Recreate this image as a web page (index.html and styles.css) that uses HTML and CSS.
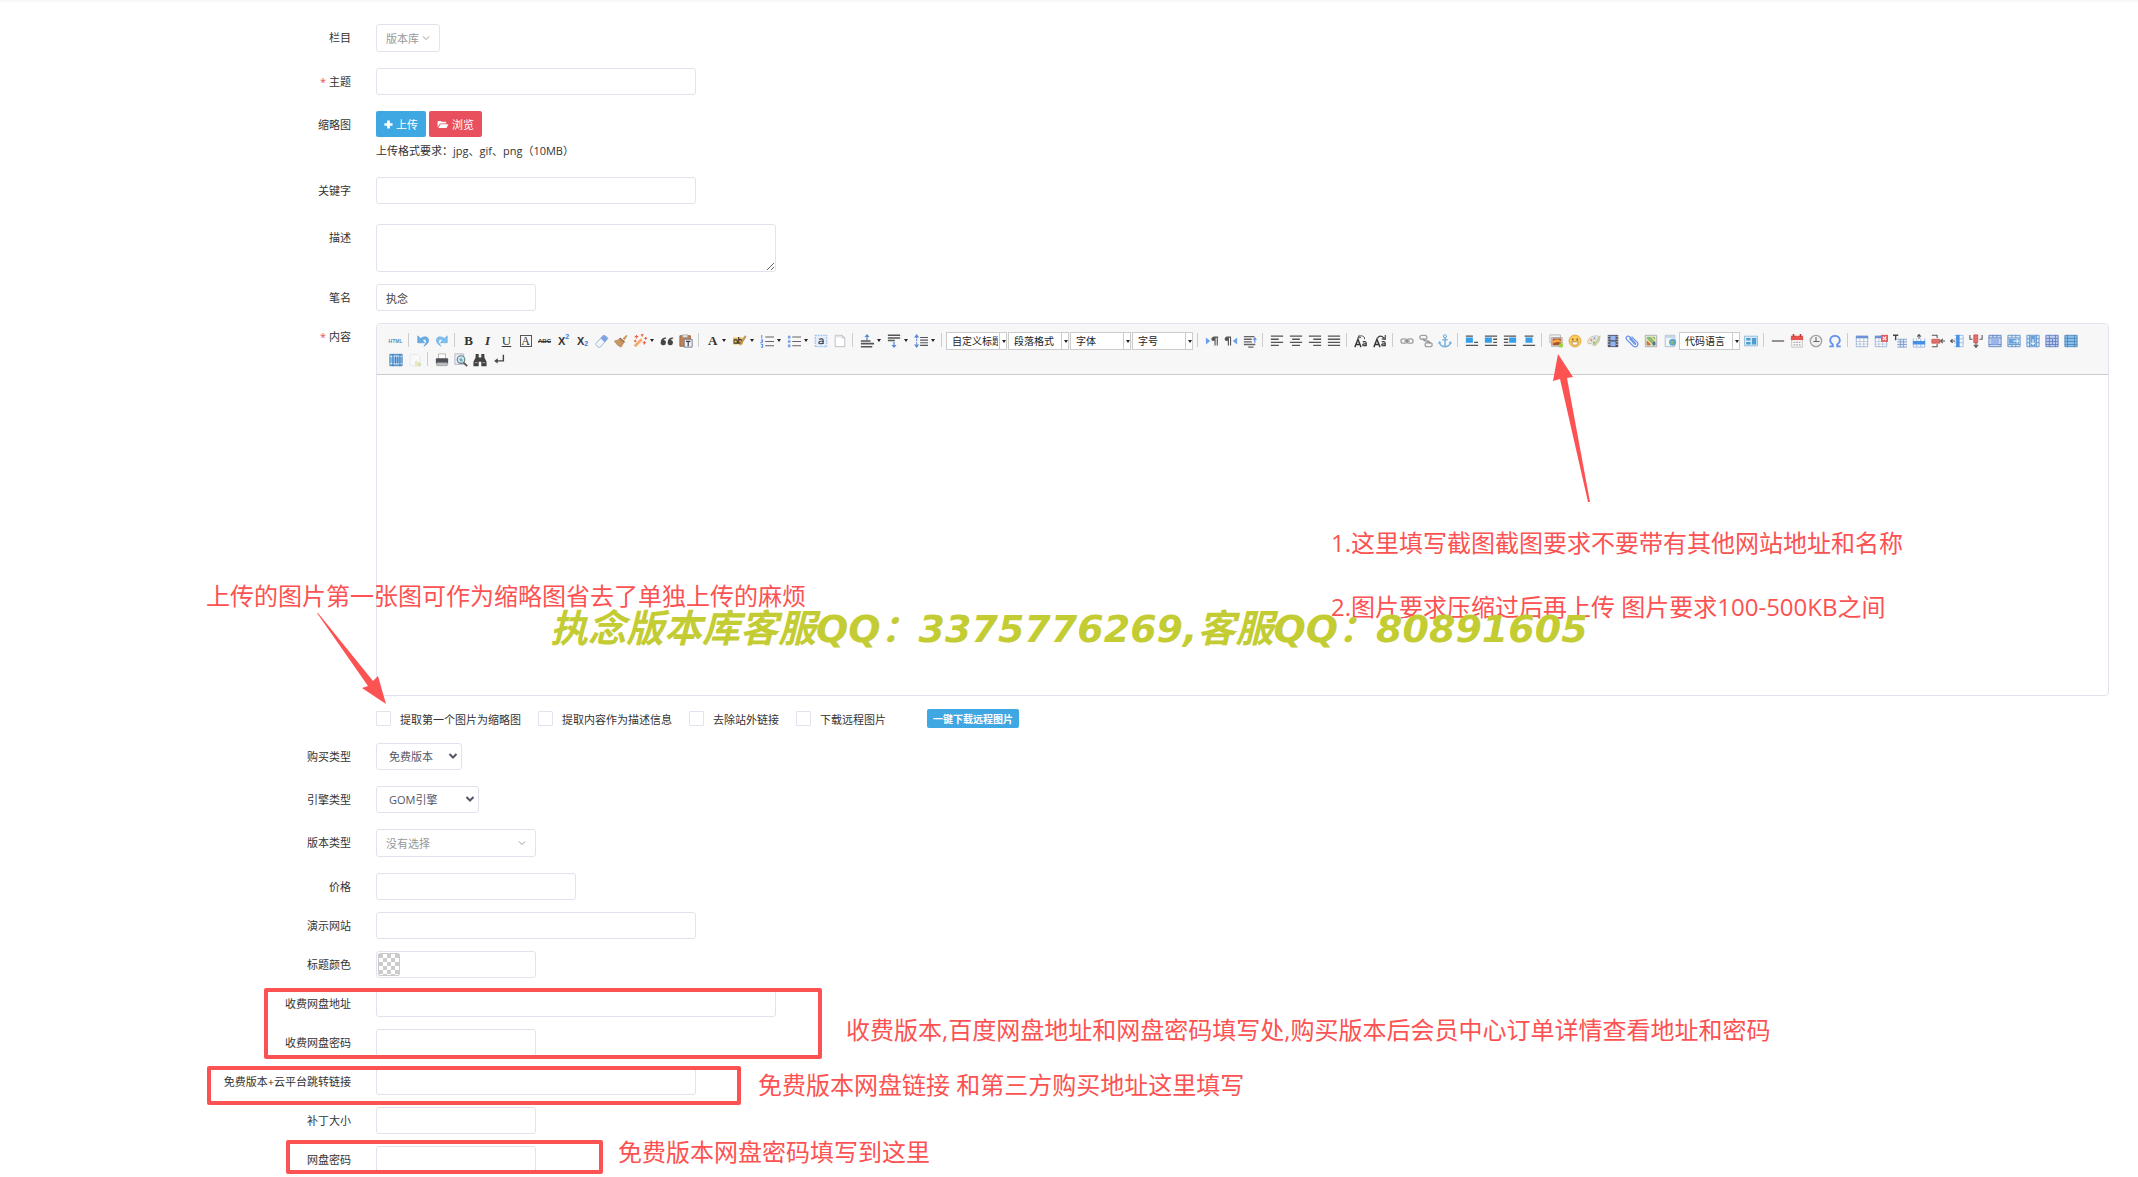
FILE: index.html
```html
<!DOCTYPE html>
<html lang="zh-CN">
<head>
    <meta charset="UTF-8">
    <meta name="viewport" content="width=device-width, initial-scale=1.0">
    <title>发布版本</title>
    <link rel="stylesheet" href="styles.css">
</head>
<body>

<form class="post-form">
    <div class="row row-tall">
        <label class="row-label" for="catid">栏目</label>
        <div class="row-field">
            <button type="button" class="picker" id="catid">版本库
                <svg class="chevron" viewBox="0 0 8 8"><path d="M1 2.500l3 3 3-3" fill="none" stroke="#999"/></svg>
            </button>
        </div>
    </div>

    <div class="row row-tall">
        <label class="row-label" for="title"><span class="required">*</span> 主题</label>
        <div class="row-field"><input type="text" class="control w-320" id="title"></div>
    </div>

    <div class="row">
        <span class="row-label">缩略图</span>
        <div class="row-field">
            <div class="btn-group">
                <button type="button" class="btn btn-blue"><svg viewBox="0 0 10 10"><path d="M3.500 0.500h3v3h3v3h-3v3h-3v-3h-3v-3h3z" fill="#fff"/></svg>上传</button>
                <button type="button" class="btn btn-red"><svg class="wide" viewBox="0 0 12 10"><path d="M0 8V1.500Q0 1 .5 1H3.500l1 1H9q.5 0 .5.5V4H3.500Q2.600 4 2 5z" fill="#fff"/><path d="M3.300 4.800H12L10 9H.8z" fill="#fff"/></svg>浏览</button>
            </div>
            <p class="help">上传格式要求：jpg、gif、png（10MB）</p>
        </div>
    </div>

    <div class="row row-keywords">
        <label class="row-label" for="keywords">关键字</label>
        <div class="row-field"><input type="text" class="control w-320" id="keywords"></div>
    </div>

    <div class="row">
        <label class="row-label" for="description">描述</label>
        <div class="row-field"><textarea class="control w-400" id="description"></textarea></div>
    </div>

    <div class="row">
        <label class="row-label" for="author">笔名</label>
        <div class="row-field"><input type="text" class="control w-160" id="author" value="执念"></div>
    </div>

    <div class="row">
        <label class="row-label" for="content"><span class="required">*</span> 内容</label>
        <div class="row-field">
            <div class="editor">
                <div class="toolbar">
                    <button type="button" class="tool tool-html" aria-label="源代码">HTML</button>
                    <span class="split"></span>
                    <button type="button" class="tool" aria-label="撤销"><svg viewBox="0 0 16 16"><path d="M2 2v8h8L7.500 7.500Q10 5 11.500 7T9 14Q16 10 14 5.500T5 5z" fill="#5aa5e4" stroke="#2f7fc8" stroke-width=".6"/></svg></button>
                    <button type="button" class="tool" aria-label="重做"><svg viewBox="0 0 16 16"><path d="M14 2v8H6l2.500-2.500Q6 5 4.500 7T7 14Q0 10 2 5.500T11 5z" fill="#6fb8ee" stroke="#4a9ada" stroke-width=".6"/></svg></button>
                    <span class="split"></span>
                    <button type="button" class="tool tool-serif bold" aria-label="加粗">B</button>
                    <button type="button" class="tool tool-serif bold italic" aria-label="斜体">I</button>
                    <button type="button" class="tool tool-serif underline" aria-label="下划线">U</button>
                    <button type="button" class="tool tool-serif" aria-label="字符边框"><span class="boxed">A</span></button>
                    <button type="button" class="tool tool-abc" aria-label="删除线">ABC</button>
                    <button type="button" class="tool tool-script" aria-label="上标">X<sup>2</sup></button>
                    <button type="button" class="tool tool-script" aria-label="下标">X<sub>2</sub></button>
                    <button type="button" class="tool" aria-label="清除格式"><svg viewBox="0 0 16 16"><path d="M1 11L9 2q1-1 2.500 0L14 4q1 1 0 2L6 15q-1 .8-2 0L1.500 13q-1-1-.5-2z" fill="#f2f5fa" stroke="#8ea3c4"/><path d="M6.500 5L9 2q1-1 2.500 0L14 4q1 1 0 2l-3 3.500z" fill="#6f9be0"/></svg></button>
                    <button type="button" class="tool" aria-label="格式刷"><svg viewBox="0 0 16 16"><path d="M10 5l4-4 1.500 1L12 7z" fill="#c98a4b"/><path d="M7 4l6 5-2 1-5-4.500z" fill="#8d5a2c"/><path d="M6 5.500L11 10l-3 5q-5-2-7.500-7Q4 8 6 5.500z" fill="#c58d50" stroke="#9b6631" stroke-width=".7"/></svg></button>
                    <button type="button" class="tool tool-drop" aria-label="自动排版"><svg viewBox="0 0 16 16"><path d="M2 14l8-8" stroke="#f2a35c" stroke-width="3"/><path d="M2 3h4M4 1v4M9 1h3M10.500 0v3M13 5h3M14.500 3.500v3M11 10h4M13 8v4M1 8h3M2.500 6.500v3" stroke="#e8562c" stroke-width="1.300"/></svg></button>
                    <button type="button" class="tool" aria-label="引用"><svg viewBox="0 0 16 16"><path d="M7 4Q1 4 .8 9.500a3 3 0 1 0 3.200-2.600Q4.500 5.500 7 5zM15 4Q9 4 8.800 9.500a3 3 0 1 0 3.200-2.600Q12.500 5.500 15 5z" fill="#333"/></svg></button>
                    <button type="button" class="tool" aria-label="纯文本粘贴"><svg viewBox="0 0 16 16"><path d="M1 2h12v12H1z" fill="#b87743" stroke="#8a5227"/><path d="M4 1h6v3H4z" fill="#ddd" stroke="#888" stroke-width=".6"/><path d="M6 6h9v9H6z" fill="#eef2f8" stroke="#667"/><path d="M8 8.500h5M10.500 8.500V14" stroke="#222" stroke-width="1.300"/></svg></button>
                    <span class="split"></span>
                    <button type="button" class="tool tool-serif tool-drop bold" aria-label="字体颜色">A</button>
                    <button type="button" class="tool tool-drop" aria-label="背景色"><svg viewBox="0 0 16 16"><path d="M0 4h11v8H0z" fill="#f0b63c"/><path d="M1 8.500q0-2 2-2t2 2v2H2.500q-1.500 0-1.500-1M6.500 3.500v7H8q2 0 2-2t-2-2H7" fill="none" stroke="#222" stroke-width="1.300"/><path d="M15 3l-5 8-2 2 .5-3 5-8z" fill="#c99a5c" stroke="#7a5525" stroke-width=".5"/></svg></button>
                    <button type="button" class="tool tool-drop" aria-label="有序列表"><svg viewBox="0 0 16 16"><path d="M2 1v4M1 7h2v1.500L1 10h2M1 12h2v3H1" fill="none" stroke="#4f83e8" stroke-width="1.200"/><path d="M6 3.500h10M6 8.500h10M6 13.500h10" stroke="#555" stroke-width="1.200"/></svg></button>
                    <button type="button" class="tool tool-drop" aria-label="无序列表"><svg viewBox="0 0 16 16"><path d="M1 2h3v3H1zM1 7h3v3H1zM1 12h3v3H1z" fill="#6c95ee"/><path d="M6 3.500h10M6 8.500h10M6 13.500h10" stroke="#555" stroke-width="1.200"/></svg></button>
                    <button type="button" class="tool" aria-label="全选"><svg viewBox="0 0 16 16"><rect x="1.500" y="1.500" width="13" height="13" fill="#e3eefc" stroke="#9dbfee" stroke-width="1.500" stroke-dasharray="2 1"/><path d="M5.500 6q5-1.500 5 1.500v4M10.500 8q-5 0-5 2t5 .5" fill="none" stroke="#333" stroke-width="1.400"/></svg></button>
                    <button type="button" class="tool" aria-label="清空文档"><svg viewBox="0 0 16 16"><path d="M2.500 1.500h8l3 3v10h-11z" fill="#fff" stroke="#aeb4bd"/><path d="M10.500 1.500v3h3" fill="none" stroke="#aeb4bd"/><path d="M3 2h7v2H3z" fill="#dfe3e8"/></svg></button>
                    <span class="split"></span>
                    <button type="button" class="tool tool-drop" aria-label="段前距"><svg viewBox="0 0 16 16"><path d="M8 7V3" stroke="#4f7fd0" stroke-width="1.500"/><path d="M8 0l3 3.500H5z" fill="#4f7fd0"/><path d="M1 8h11M1 11h15M1 14.500h13" stroke="#444" stroke-width="1.800"/></svg></button>
                    <button type="button" class="tool tool-drop" aria-label="段后距"><svg viewBox="0 0 16 16"><path d="M1 1.500h14M1 4.500h14M1 7.500h8" stroke="#444" stroke-width="1.800"/><path d="M8 9v4" stroke="#4f7fd0" stroke-width="1.500"/><path d="M8 16l3-3.500H5z" fill="#4f7fd0"/></svg></button>
                    <button type="button" class="tool tool-drop" aria-label="行间距"><svg viewBox="0 0 16 16"><path d="M3 3v10" stroke="#4f7fd0" stroke-width="1.300" stroke-dasharray="2 1"/><path d="M3 0l3 4H0zM3 16l3-4H0z" fill="#4f7fd0"/><path d="M7 4h9M7 7h9M7 10h9M7 13h9" stroke="#444" stroke-width="1.400"/></svg></button>
                    <span class="split"></span>
                    <span class="combo"><select aria-label="自定义标题"><option>自定义标题</option></select></span>
                    <span class="combo"><select aria-label="段落格式"><option>段落格式</option></select></span>
                    <span class="combo"><select aria-label="字体"><option>字体</option></select></span>
                    <span class="combo"><select aria-label="字号"><option>字号</option></select></span>
                    <span class="split"></span>
                    <button type="button" class="tool" aria-label="从左向右"><svg viewBox="0 0 16 16"><path d="M1 4l5 4-5 4z" fill="#5b97f0"/><path d="M15 3.500H9.500M11.500 4v9M14 4v9" fill="none" stroke="#444" stroke-width="1.300"/><circle cx="9.500" cy="5.800" r="2.300" fill="#444"/></svg></button>
                    <button type="button" class="tool" aria-label="从右向左"><svg viewBox="0 0 16 16"><path d="M15 4l-5 4 5 4z" fill="#5b97f0"/><path d="M8 3.500H2.500M5 4v9M7.500 4v9" fill="none" stroke="#444" stroke-width="1.300"/><circle cx="3" cy="5.800" r="2.300" fill="#444"/></svg></button>
                    <button type="button" class="tool" aria-label="首行缩进"><svg viewBox="0 0 16 16"><path d="M1 3h12M1 6h9M1 9h9M1 12h13M6 15h6" stroke="#555" stroke-width="1.700"/><path d="M13.500 10V6" stroke="#4f7fd0" stroke-width="1.300"/><path d="M13.500 3.500l2.500 3h-5z" fill="#4f7fd0"/></svg></button>
                    <span class="split"></span>
                    <button type="button" class="tool" aria-label="居左对齐"><svg viewBox="0 0 16 16"><path d="M1 2.500h14M1 6h9M1 9.500h14M1 13h9" stroke="#444" stroke-width="1.500"/></svg></button>
                    <button type="button" class="tool" aria-label="居中对齐"><svg viewBox="0 0 16 16"><path d="M1 2.500h14M3.500 6h9M1 9.500h14M3.500 13h9" stroke="#444" stroke-width="1.500"/></svg></button>
                    <button type="button" class="tool" aria-label="居右对齐"><svg viewBox="0 0 16 16"><path d="M1 2.500h14M6 6h9M1 9.500h14M6 13h9" stroke="#444" stroke-width="1.500"/></svg></button>
                    <button type="button" class="tool" aria-label="两端对齐"><svg viewBox="0 0 16 16"><path d="M1 2.500h14M1 6h14M1 9.500h14M1 13h14" stroke="#444" stroke-width="1.500"/></svg></button>
                    <span class="split"></span>
                    <button type="button" class="tool" aria-label="字母大写"><svg viewBox="0 0 16 16"><path d="M1 15l3.500-9L8 15M2.500 12h4" fill="none" stroke="#222" stroke-width="1.600"/><path d="M10 9q4-1 4 1.500V14M14 11q-4 0-4 1.500t4 .5" fill="none" stroke="#222" stroke-width="1.300"/><path d="M5 4q3-4 7 0V6M6 1L4.500 4.500 8 4" fill="none" stroke="#333"/></svg></button>
                    <button type="button" class="tool" aria-label="字母小写"><svg viewBox="0 0 16 16"><path d="M1 15l3.500-9L8 15M2.500 12h4" fill="none" stroke="#222" stroke-width="1.600"/><path d="M10 9q4-1 4 1.500V14M14 11q-4 0-4 1.500t4 .5" fill="none" stroke="#222" stroke-width="1.300"/><path d="M5 5q3-5 8 0M14 1v5l-4-.5" fill="none" stroke="#333" stroke-width="1.300"/></svg></button>
                    <span class="split"></span>
                    <button type="button" class="tool" aria-label="超链接"><svg viewBox="0 0 16 16"><rect x="1" y="5.500" width="7" height="5" rx="2.500" fill="none" stroke="#999" stroke-width="1.500"/><rect x="8" y="5.500" width="7" height="5" rx="2.500" fill="none" stroke="#999" stroke-width="1.500"/><path d="M5 8h6" stroke="#777" stroke-width="1.500"/></svg></button>
                    <button type="button" class="tool" aria-label="取消链接"><svg viewBox="0 0 16 16"><rect x="1" y="1.500" width="8" height="4.500" rx="2.200" fill="none" stroke="#999" stroke-width="1.500"/><rect x="7" y="10" width="8" height="4.500" rx="2.200" fill="none" stroke="#999" stroke-width="1.500"/><path d="M5 5q0 3 4 3t3 3" fill="none" stroke="#888" stroke-width="1.500"/></svg></button>
                    <button type="button" class="tool" aria-label="锚点"><svg viewBox="0 0 16 16"><circle cx="8" cy="2.500" r="1.700" fill="none" stroke="#6fabdc" stroke-width="1.300"/><path d="M8 4v10.500M5 6.500h6M1.500 9q.5 5 6.500 5.500Q14 14 14.500 9" fill="none" stroke="#6fabdc" stroke-width="1.700"/><path d="M0 11l1.500-3 2.500 2.500zM16 11l-1.500-3-2.500 2.500z" fill="#6fabdc"/></svg></button>
                    <span class="split"></span>
                    <button type="button" class="tool" aria-label="默认"><svg viewBox="0 0 16 16"><path d="M1 4h8v6H1z" fill="#2196e8"/><path d="M1 2.500h8M10.500 9.500H15M1 13h14" stroke="#444" stroke-width="1.500"/></svg></button>
                    <button type="button" class="tool" aria-label="左浮动"><svg viewBox="0 0 16 16"><path d="M1 4h8v6H1z" fill="#2196e8"/><path d="M1 2.500h14M10.500 6H15M10.500 9.500H15M1 13h14" stroke="#444" stroke-width="1.500"/></svg></button>
                    <button type="button" class="tool" aria-label="右浮动"><svg viewBox="0 0 16 16"><path d="M7 4h8v6H7z" fill="#2196e8"/><path d="M1 2.500h14M1 6h5M1 9.500h5M1 13h14" stroke="#444" stroke-width="1.500"/></svg></button>
                    <button type="button" class="tool" aria-label="居中"><svg viewBox="0 0 16 16"><path d="M4 4h8v6H4z" fill="#2196e8"/><path d="M3 2.500h10M1 13h14" stroke="#444" stroke-width="1.500"/></svg></button>
                    <span class="split"></span>
                    <button type="button" class="tool" aria-label="多图上传"><svg viewBox="0 0 16 16"><path d="M1 1h12v9H1z" fill="#f4f4f4" stroke="#aaa"/><path d="M3 4h12v10H3z" fill="#fff" stroke="#999"/><path d="M4 5h10v8H4z" fill="#a3401c"/><path d="M4 8q5-4 10 0v2q-5-2-10 1z" fill="#f5a035"/><circle cx="13.500" cy="13" r="2.500" fill="#8ed31e"/></svg></button>
                    <button type="button" class="tool" aria-label="表情"><svg viewBox="0 0 16 16"><circle cx="8" cy="8" r="6.800" fill="#fbc84a" stroke="#e09a26"/><path d="M5.500 5v2.500M10.500 5v2.500" stroke="#7a4a10" stroke-width="1.600"/><path d="M4 9h8q-1 4-4 4T4 9z" fill="#fff" stroke="#a8661a" stroke-width=".8"/></svg></button>
                    <button type="button" class="tool" aria-label="涂鸦"><svg viewBox="0 0 16 16"><path d="M1 8q2-6 10-6 5 1 3 6-3 6-7 5-1-3-3-2-4 1-3-3z" fill="#e8e4d8" stroke="#b3ad9c" stroke-width=".8"/><circle cx="5" cy="7" r="1.200" fill="#e67a4b"/><circle cx="8.500" cy="5" r="1.200" fill="#6aa7e0"/><circle cx="8" cy="10" r="1.300" fill="#87b958"/><path d="M15 1L9 10l-2 4 3.500-2.500L15.500 3z" fill="#b7c38a"/></svg></button>
                    <button type="button" class="tool" aria-label="视频"><svg viewBox="0 0 16 16"><path d="M2 1h12v14H2z" fill="#3e4450"/><path d="M5 2h6v5H5zM5 8.500h6V14H5z" fill="#88aef2"/><path d="M3.300 2v12M12.700 2v12" stroke="#dde" stroke-width="1.200" stroke-dasharray="1.500 1.500"/></svg></button>
                    <button type="button" class="tool" aria-label="附件"><svg viewBox="0 0 16 16"><path d="M5 5l6 6.500q1.500 1 .8-.8L5.500 3.500Q3.500 1.500 2 3t0 3.500l7.500 7.500q3 1.500 4.500-.5t0-4L7.500 3" fill="none" stroke="#5d8be6" stroke-width="1.500"/></svg></button>
                    <button type="button" class="tool" aria-label="百度地图"><svg viewBox="0 0 16 16"><path d="M1.500 1.500h13v13h-13z" fill="#fff" stroke="#999"/><path d="M3 3h10v10H3z" fill="#7db36c"/><path d="M3 8h4v5H3z" fill="#d65c3a"/><path d="M8 3l5 5M3 6l7 7" stroke="#f0df7c" stroke-width="1.500"/><path d="M10 9h3v4h-3z" fill="#3a5e9c"/></svg></button>
                    <button type="button" class="tool" aria-label="网页"><svg viewBox="0 0 16 16"><path d="M2.500 1.500h11v13h-11z" fill="#f1f5fa" stroke="#a9b6c6"/><path d="M3 2h10v2.500H3z" fill="#bcd3ea"/><circle cx="11" cy="9.500" r="4" fill="#4c9cce"/><path d="M9 7q3 0 3 2t-2 3.500Q8 10 9 7z" fill="#76bb57"/></svg></button>
                    <span class="combo"><select aria-label="代码语言"><option>代码语言</option></select></span>
                    <button type="button" class="tool" aria-label="模板"><svg viewBox="0 0 16 16"><path d="M.5 2.500h15v11H.5z" fill="#d8ecfa" stroke="#7fb0d4"/><path d="M2.500 4.500h5v3h-5zM2.500 9h5v3h-5zM9 4.500h5V12H9z" fill="#3b94cf"/></svg></button>
                    <span class="split"></span>
                    <button type="button" class="tool" aria-label="分隔线"><svg viewBox="0 0 16 16"><path d="M1 8h14" stroke="#333" stroke-width="1.300"/></svg></button>
                    <button type="button" class="tool" aria-label="日期"><svg viewBox="0 0 16 16"><path d="M2 3h12v12H2z" fill="#fff" stroke="#b5b5b5"/><path d="M1 2h14v5H1z" fill="#e2433c"/><path d="M4 0v3M12 0v3" stroke="#b22" stroke-width="1.800"/><path d="M4 9.500h8M4 12.500h8" stroke="#999" stroke-width="1.500" stroke-dasharray="2 1"/></svg></button>
                    <button type="button" class="tool" aria-label="时间"><svg viewBox="0 0 16 16"><circle cx="8" cy="8" r="6.500" fill="#f0f0f0" stroke="#999" stroke-width="1.500"/><path d="M8 3.500V8.500h4M5 8.500h3" fill="none" stroke="#555" stroke-width="1.200"/></svg></button>
                    <button type="button" class="tool" aria-label="特殊字符"><svg viewBox="0 0 16 16"><path d="M1.500 14H5.500V12Q2 9.500 2.500 6.500 3.500 2 8 2t5.500 4.500Q14 9.500 10.500 12v2h4" fill="none" stroke="#4f86ee" stroke-width="2"/></svg></button>
                    <span class="split"></span>
                    <button type="button" class="tool" aria-label="插入表格"><svg viewBox="0 0 16 16"><path d="M1.500 2.500h13v12h-13z" fill="#fff" stroke="#8fa6d2"/><path d="M1 2h14v3H1z" fill="#5f88d2"/><path d="M1 8.500h14M1 11.500h14M5.500 5v10M10 5v10" stroke="#a9b9d6" stroke-width=".9"/></svg></button>
                    <button type="button" class="tool" aria-label="删除表格"><svg viewBox="0 0 16 16"><path d="M1.500 2.500h13v12h-13z" fill="#fff" stroke="#8fa6d2"/><path d="M1 2h14v3H1z" fill="#5f88d2"/><path d="M1 8.500h14M1 11.500h14M5.500 5v10M10 5v10" stroke="#a9b9d6" stroke-width=".9"/><path d="M8 1h8v8H8z" fill="#e5484d"/><path d="M10 3l4 4M14 3l-4 4" stroke="#fff" stroke-width="1.500"/></svg></button>
                    <button type="button" class="tool" aria-label="表格前插入行"><svg viewBox="0 0 16 16"><path d="M0 1.500h6M3 1.500V7" stroke="#333" stroke-width="1.600"/><path d="M5 6h11v9H5z" fill="#dfe8f5"/><path d="M5 6h11M5 9h11M5 12h11M5 15h11M8.500 6v9M12 6v9" stroke="#7594c4"/></svg></button>
                    <button type="button" class="tool" aria-label="前插入行"><svg viewBox="0 0 16 16"><path d="M1.500 5v10h13V5M5.500 5v10M10 5v10" fill="none" stroke="#8fb1e2"/><path d="M1 8h14v4H1z" fill="#2f86e6"/><path d="M8 5.500V1M6 3l2-2.500L10 3" fill="none" stroke="#444" stroke-width="1.200"/></svg></button>
                    <button type="button" class="tool" aria-label="删除行"><svg viewBox="0 0 16 16"><path d="M1 1.500h6v3M1 14.500h6v-3" fill="none" stroke="#444" stroke-width="1.200"/><path d="M1 6h9v4.500H1z" fill="#e2605c" stroke="#b33" stroke-width=".8"/><path d="M10 8h6M13.500 5.500L11 8l2.500 2.500" fill="none" stroke="#444" stroke-width="1.300"/></svg></button>
                    <button type="button" class="tool" aria-label="前插入列"><svg viewBox="0 0 16 16"><path d="M5 1.500h10v13H5M5 5.500h10M5 10h10" fill="none" stroke="#8fb1e2"/><path d="M7 1h4v14H7z" fill="#2f86e6"/><path d="M6 8H1M3 6L.5 8 3 10" fill="none" stroke="#444" stroke-width="1.200"/></svg></button>
                    <button type="button" class="tool" aria-label="删除列"><svg viewBox="0 0 16 16"><path d="M1 1v5h3M15 1v5h-3" fill="none" stroke="#444" stroke-width="1.200"/><path d="M5.500 1h4.500v9H5.500z" fill="#e2605c" stroke="#b33" stroke-width=".8"/><path d="M8 10v6M5.500 12.500L8 15l2.500-2.500" fill="none" stroke="#444" stroke-width="1.300"/></svg></button>
                    <button type="button" class="tool" aria-label="合并单元格"><svg viewBox="0 0 16 16"><path d="M1 1.500h14v13H1z" fill="#c5d4f0" stroke="#4f74bf"/><path d="M1 4.500h14M5.500 1v3M10 1v3M1 12h14" stroke="#4f74bf"/><path d="M3.500 5h9v7h-9z" fill="#92aeea"/></svg></button>
                    <button type="button" class="tool" aria-label="右合并单元格"><svg viewBox="0 0 16 16"><path d="M1 1.500h14v13H1z" fill="#d9e8f8" stroke="#4f88c4"/><path d="M1 4.500h14M1 12h14M5.500 1v3M10 1v3M5.500 12v3M10 12v3" stroke="#4f88c4"/><path d="M2 5.500h12V11H2z" fill="#5b9bd8"/><path d="M7 8h6M11 6l2 2-2 2" fill="none" stroke="#fff" stroke-width="1.200"/></svg></button>
                    <button type="button" class="tool" aria-label="下合并单元格"><svg viewBox="0 0 16 16"><path d="M1 1.500h14v13H1z" fill="#d9e8f8" stroke="#4f88c4"/><path d="M4 1v14M12 1v14M1 5.500h3M12 5.500h3M1 10h3M12 10h3" stroke="#4f88c4"/><path d="M5 2h6v12H5z" fill="#5b9bd8"/><path d="M8 6v6M6 10l2 2 2-2" fill="none" stroke="#fff" stroke-width="1.200"/></svg></button>
                    <button type="button" class="tool" aria-label="拆分成行"><svg viewBox="0 0 16 16"><path d="M1 1.500h14v13H1z" fill="#b9caef" stroke="#4f70bb"/><path d="M1 5h14M1 8.500h14M1 12h14M5 1v14M8.500 5v7M12 1v14" stroke="#4f70bb"/></svg></button>
                    <button type="button" class="tool" aria-label="拆分成列"><svg viewBox="0 0 16 16"><path d="M1 1.500h14v13H1z" fill="#7fb9e9" stroke="#3f7db6"/><path d="M1 5h14M1 8.500h14M1 12h14M4 1v14M12 1v14" stroke="#3f7db6"/></svg></button>
                    <button type="button" class="tool" aria-label="拆分单元格"><svg viewBox="0 0 16 16"><path d="M1 1.500h14v13H1z" fill="#7fb6ea" stroke="#2f70ac"/><path d="M1 4h14M1 12h14" stroke="#d8eaf8"/><path d="M4.500 1v14M7.500 4v8M10 4v8M12.500 1v14" stroke="#2f70ac" stroke-width="1.200"/></svg></button>
                    <button type="button" class="tool faded" aria-label="图表"><svg viewBox="0 0 16 16"><path d="M2.500 1.500h8l3 3v10h-11z" fill="#fff" stroke="#c8ccd2"/><path d="M8 9h3v6H8z" fill="#e6c84a"/><path d="M11 11h4v4h-4z" fill="#8fc15a"/></svg></button>
                    <span class="split"></span>
                    <button type="button" class="tool" aria-label="打印"><svg viewBox="0 0 16 16"><path d="M4 1h8v6H4z" fill="#fff" stroke="#aaa"/><path d="M1 7q0-1 1-1h12q1 0 1 1v5H1z" fill="#3c3f45"/><path d="M2 11h12v3.500H2z" fill="#b8bbc0" stroke="#777" stroke-width=".6"/></svg></button>
                    <button type="button" class="tool" aria-label="预览"><svg viewBox="0 0 16 16"><path d="M1 1h10v12H1z" fill="#e9edf1" stroke="#aab"/><circle cx="8" cy="7.500" r="4.300" fill="#c9e3f2" stroke="#56707e" stroke-width="1.300"/><path d="M6 7.500q2-3 3.500 0t-2 2z" fill="#5ba0a8"/><path d="M11 11l4 4" stroke="#444" stroke-width="2"/></svg></button>
                    <button type="button" class="tool" aria-label="查询替换"><svg viewBox="0 0 16 16"><path d="M3 1h3.500v4h3V1H13v4l2.500 5v5H9.500v-5h-3v5H.5v-5L3 5z" fill="#2f2f2f"/><path d="M2 11h3M11 11h3" stroke="#aaa"/></svg></button>
                    <button type="button" class="tool" aria-label="换行"><svg viewBox="0 0 16 16"><path d="M13 2v7H5" fill="none" stroke="#333" stroke-width="1.600"/><path d="M6.500 6v6L2.500 9z" fill="#333"/></svg></button>
                </div>
                <textarea class="editor-body" id="content"></textarea>
            </div>
            <div class="options">
                <label class="option"><input type="checkbox">提取第一个图片为缩略图</label>
                <label class="option"><input type="checkbox">提取内容作为描述信息</label>
                <label class="option"><input type="checkbox">去除站外链接</label>
                <label class="option"><input type="checkbox">下载远程图片</label>
                <button type="button" class="btn btn-blue btn-small">一键下载远程图片</button>
            </div>
        </div>
    </div>

    <div class="row row-tall">
        <label class="row-label" for="buytype">购买类型</label>
        <div class="row-field">
            <span class="select-box">
                <select class="control" id="buytype"><option>免费版本</option></select>
                <svg viewBox="0 0 10 10"><path d="M1.500 3L5 6.500 8.500 3" fill="none" stroke="#556" stroke-width="2"/></svg>
            </span>
        </div>
    </div>

    <div class="row row-tall">
        <label class="row-label" for="engine">引擎类型</label>
        <div class="row-field">
            <span class="select-box select-engine">
                <select class="control" id="engine"><option>GOM引擎</option></select>
                <svg viewBox="0 0 10 10"><path d="M1.500 3L5 6.500 8.500 3" fill="none" stroke="#556" stroke-width="2"/></svg>
            </span>
        </div>
    </div>

    <div class="row row-tall">
        <label class="row-label" for="vertype">版本类型</label>
        <div class="row-field">
            <button type="button" class="picker w-160" id="vertype">没有选择
                <svg class="chevron" viewBox="0 0 8 8"><path d="M1 2.500l3 3 3-3" fill="none" stroke="#999"/></svg>
            </button>
        </div>
    </div>

    <div class="row">
        <label class="row-label" for="price">价格</label>
        <div class="row-field"><input type="text" class="control w-200" id="price"></div>
    </div>

    <div class="row">
        <label class="row-label" for="demo">演示网站</label>
        <div class="row-field"><input type="text" class="control w-320" id="demo"></div>
    </div>

    <div class="row">
        <label class="row-label" for="color">标题颜色</label>
        <div class="row-field color-field">
            <input type="text" class="control w-160" id="color">
            <span class="swatch"></span>
        </div>
    </div>

    <div class="row">
        <label class="row-label" for="payurl">收费网盘地址</label>
        <div class="row-field"><input type="text" class="control w-400" id="payurl"></div>
    </div>

    <div class="row">
        <label class="row-label" for="paypwd">收费网盘密码</label>
        <div class="row-field"><input type="text" class="control w-160" id="paypwd"></div>
    </div>

    <div class="row">
        <label class="row-label" for="freeurl">免费版本+云平台跳转链接</label>
        <div class="row-field"><input type="text" class="control w-320" id="freeurl"></div>
    </div>

    <div class="row">
        <label class="row-label" for="size">补丁大小</label>
        <div class="row-field"><input type="text" class="control w-160" id="size"></div>
    </div>

    <div class="row">
        <label class="row-label" for="freepwd">网盘密码</label>
        <div class="row-field"><input type="text" class="control w-160" id="freepwd"></div>
    </div>
</form>

<!-- red guide notes drawn over the form -->
<div class="guide">
    <p class="note note-thumb">上传的图片第一张图可作为缩略图省去了单独上传的麻烦</p>
    <p class="note note-shot">1.这里填写截图截图要求不要带有其他网站地址和名称</p>
    <p class="note note-zip">2.图片要求压缩过后再上传 图片要求100-500KB之间</p>
    <p class="note note-pay">收费版本,百度网盘地址和网盘密码填写处,购买版本后会员中心订单详情查看地址和密码</p>
    <p class="note note-free">免费版本网盘链接 和第三方购买地址这里填写</p>
    <p class="note note-pwd">免费版本网盘密码填写到这里</p>

    <div class="frame frame-pay"></div>
    <div class="frame frame-free"></div>
    <div class="frame frame-pwd"></div>

    <svg class="arrow arrow-thumb" viewBox="0 0 70 92"><path d="M0 0L1 0L56 68L61 63L69 91L45 75L51 73z" fill="#fc5252"/></svg>
    <svg class="arrow arrow-shot" viewBox="0 0 40 150"><path d="M6 0L21 23L15 24L38 148L36 148L8 25L1 27z" fill="#fc5252"/></svg>

    <p class="watermark">执念版本库客服QQ：3375776269,客服QQ：80891605</p>
</div>

</body>
</html>
```

FILE: styles.css
```css
* {
    box-sizing: border-box;
}

body {
    margin: 0;
    position: relative;
    min-height: 100vh;
    background-color: #fff;
    border-top: 2px solid #f7f7f7;
    color: #333;
    font-family: "Open Sans", "Noto Sans CJK SC", sans-serif;
    font-size: 11px;
}

button,
input,
select,
textarea {
    font: inherit;
    color: inherit;
}

p {
    margin: 0;
}

/* form rows */
.post-form {
    padding: 22px 29px 0 0;
}

.row {
    display: grid;
    grid-template-columns: 351px 1fr;
    column-gap: 25px;
    margin-bottom: 12px;
}

.row:last-child {
    margin-bottom: 0;
}

.row-tall {
    margin-bottom: 16px;
}

.row-keywords {
    margin-bottom: 20px;
}

.row-label {
    text-align: right;
    line-height: 28px;
    height: 27px;
}

.required {
    color: #e7505a;
}

.row-field {
    display: flex;
    flex-direction: column;
    align-items: flex-start;
    min-width: 0;
}

.control {
    display: block;
    height: 27px;
    padding: 0 9px;
    border: 1px solid #e2e2ef;
    border-radius: 3px;
    background-color: #fff;
    color: #444;
}

textarea.control {
    height: 48px;
    resize: both;
}

.w-160 {
    width: 160px;
}

.w-200 {
    width: 200px;
}

.w-320 {
    width: 320px;
}

.w-400 {
    width: 400px;
}

.picker {
    display: flex;
    align-items: center;
    justify-content: space-between;
    gap: 3px;
    height: 28px;
    padding: 0 9px;
    border: 1px solid #e2e2ef;
    border-radius: 3px;
    background-color: #fff;
    color: #999;
}

.chevron {
    width: 8px;
    height: 8px;
}

.btn-group {
    display: flex;
    gap: 3px;
}

.btn {
    display: flex;
    align-items: center;
    gap: 3px;
    height: 26px;
    padding: 0 8px;
    border: none;
    border-radius: 2px;
    color: #fff;
}

.btn svg {
    width: 9px;
    height: 9px;
}

.btn svg.wide {
    width: 12px;
}

.btn-blue {
    background-color: #3fa7e1;
}

.btn-red {
    background-color: #e9505e;
}

.btn-small {
    height: 19px;
    padding: 0 6px;
    margin-left: 24px;
    font-size: 10px;
    font-weight: bold;
}

.help {
    line-height: 28px;
}

/* editor */
.editor {
    width: 100%;
    border: 1px solid #e2e2ef;
    border-radius: 4px;
}

.toolbar {
    display: flex;
    flex-wrap: wrap;
    padding: 7px 12px 5px 9px;
    background-color: #f7f7f7;
    border-bottom: 1px solid #ccc;
    border-radius: 3px 3px 0 0;
}

.tool {
    display: flex;
    align-items: center;
    justify-content: center;
    width: 19px;
    height: 19px;
    padding: 0;
    border: none;
    background: none;
    color: #333;
}

.tool svg {
    flex: none;
    width: 14px;
    height: 14px;
    opacity: 0.9;
}

.tool-html {
    font-family: "Liberation Sans", sans-serif;
    font-size: 5px;
    font-weight: bold;
    color: #5590c0;
}

.tool-serif {
    font-family: "Liberation Serif", serif;
    font-size: 13px;
}

.tool-abc {
    font-family: "Liberation Sans", sans-serif;
    font-size: 6px;
    font-weight: bold;
    text-decoration: line-through;
}

.tool-script {
    font-family: "Liberation Sans", sans-serif;
    font-size: 11px;
    font-weight: bold;
}

.tool-script sup,
.tool-script sub {
    font-size: 7px;
    line-height: 12px;
    color: #3f74e0;
}

.tool-script sup {
    align-self: flex-start;
}

.tool-script sub {
    align-self: flex-end;
}

.bold {
    font-weight: bold;
}

.italic {
    font-style: italic;
}

.underline {
    text-decoration: underline;
}

.boxed {
    width: 12px;
    height: 12px;
    border: 1px solid #555;
    line-height: 11px;
    font-size: 12px;
}

.faded {
    opacity: 0.4;
}

.tool-drop {
    width: 27px;
    justify-content: flex-start;
    padding-left: 3px;
    gap: 3px;
}

.tool-drop.tool-serif {
    padding-left: 5px;
    gap: 5px;
}

.tool-drop::after {
    content: "";
    border: 2px solid transparent;
    border-top: 3px solid #222;
    border-bottom: none;
}

.split {
    width: 2px;
    height: 14px;
    margin: 2px 3px;
    border-left: 1px solid #ccc;
}

.combo {
    position: relative;
    width: 62px;
    height: 19px;
    padding-top: 1px;
}

.combo select {
    display: block;
    appearance: none;
    width: 61px;
    height: 18px;
    padding: 0 8px 0 5px;
    border: 1px solid #ccc;
    border-radius: 0;
    background: linear-gradient(to right, #fff 52px, #ccc 52px, #ccc 53px, #fff 53px);
    font-size: 10px;
    color: #222;
}

.combo::after {
    content: "";
    position: absolute;
    right: 2px;
    top: 9px;
    border: 2px solid transparent;
    border-top: 3px solid #222;
    border-bottom: none;
    pointer-events: none;
}

.editor-body {
    display: block;
    width: 100%;
    height: 320px;
    border: none;
    background: none;
    resize: none;
}

.options {
    display: flex;
    align-items: center;
    gap: 17px;
    margin: 13px 0 3px;
}

.option {
    display: flex;
    align-items: center;
    gap: 9px;
}

.option input {
    appearance: none;
    width: 15px;
    height: 15px;
    margin: 0;
    border: 1px solid #e2e2ef;
    border-radius: 1px;
}

/* selects */
.select-box {
    position: relative;
    width: 86px;
}

.select-engine {
    width: 103px;
}

.select-box select {
    appearance: none;
    width: 100%;
    padding: 0 12px;
    color: #556;
}

.select-box svg {
    position: absolute;
    right: 4px;
    top: 8px;
    width: 10px;
    height: 10px;
    pointer-events: none;
}

.color-field {
    position: relative;
}

.swatch {
    position: absolute;
    left: 2px;
    top: 2px;
    width: 22px;
    height: 23px;
    border: 1px solid #ccc;
    border-radius: 2px;
    background: repeating-conic-gradient(#fff 0 25%, #ccc 0 50%) 0 0 / 8px 8px;
}

/* guide overlay */
.guide {
    position: absolute;
    left: 0;
    top: -2px;
    pointer-events: none;
}

.note {
    position: absolute;
    color: #fc5252;
    font-size: 24px;
    line-height: 36px;
    white-space: nowrap;
}

.note-thumb {
    left: 206px;
    top: 578px;
}

.note-shot {
    left: 1331px;
    top: 525px;
}

.note-zip {
    left: 1331px;
    top: 589px;
}

.note-pay {
    left: 846px;
    top: 1012px;
}

.note-free {
    left: 758px;
    top: 1067px;
}

.note-pwd {
    left: 618px;
    top: 1134px;
}

.frame {
    position: absolute;
    border: 4px solid #fc5252;
    border-radius: 2px;
}

.frame-pay {
    left: 264px;
    top: 988px;
    width: 558px;
    height: 71px;
}

.frame-free {
    left: 207px;
    top: 1066px;
    width: 534px;
    height: 39px;
}

.frame-pwd {
    left: 286px;
    top: 1140px;
    width: 317px;
    height: 34px;
}

.arrow {
    position: absolute;
}

.arrow-thumb {
    left: 317px;
    top: 613px;
    width: 70px;
    height: 92px;
}

.arrow-shot {
    left: 1552px;
    top: 354px;
    width: 40px;
    height: 150px;
}

.watermark {
    position: absolute;
    left: 550px;
    top: 604px;
    color: #c4cc33;
    font-family: "DejaVu Sans", "Noto Sans CJK SC", sans-serif;
    font-size: 38px;
    font-weight: bold;
    font-style: italic;
    line-height: 50px;
    white-space: nowrap;
}
```
